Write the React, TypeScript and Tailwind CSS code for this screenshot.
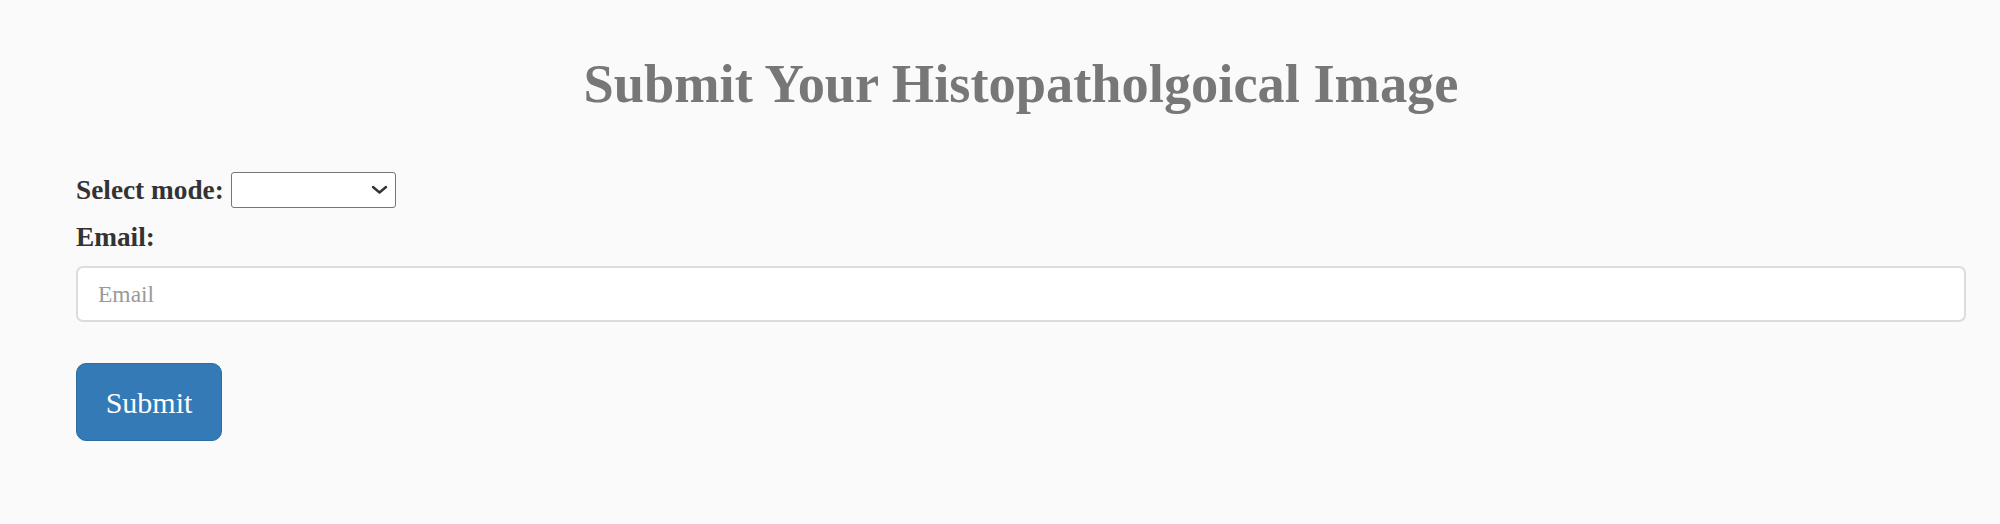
import { FC } from "react";

const Chevron: FC = () => (
  <svg
    width="17"
    height="10"
    viewBox="0 0 17 10"
    fill="none"
    stroke="#333"
    strokeWidth="2.4"
    strokeLinecap="round"
    strokeLinejoin="round"
  >
    <path d="M2 2 L8.5 7.5 L15 2" />
  </svg>
);

const App: FC = () => {
  return (
    <main className="min-h-screen w-full bg-[#fafafa] pl-[76px] pr-[34px] pt-[57px] font-['Liberation_Serif','Times_New_Roman',serif]">
      <h1 className="text-center text-[54.4px] leading-[55px] font-bold text-[#777777]">
        Submit Your Histopatholgoical Image
      </h1>

      <form className="mt-[60px] flex flex-col" onSubmit={(e) => e.preventDefault()}>
        <div className="flex items-center">
          <label className="text-[27.3px] leading-[27px] font-bold text-[#333333]">Select mode:</label>
          <div className="relative ml-[7px] h-[36px] w-[165px]">
            <select className="h-full w-full appearance-none rounded-[3px] border border-[#767676] bg-white" />
            <span className="pointer-events-none absolute right-[8px] top-[13px] flex">
              <Chevron />
            </span>
          </div>
        </div>

        <label className="mt-[16px] text-[27.3px] leading-[27px] font-bold text-[#333333]">Email:</label>
        <input
          type="email"
          placeholder="Email"
          className="mt-[15px] h-[56px] w-full rounded-[7px] border-2 border-[#dcdcdc] bg-white px-[20px] text-[23.5px] text-[#555555] placeholder:text-[#9a9a9a] outline-none"
        />

        <div className="mt-[41px]">
          <button
            type="submit"
            className="h-[78px] w-[146px] rounded-[10px] border border-[#2e6da4] bg-[#337ab7] text-[30px] text-white"
          >
            Submit
          </button>
        </div>
      </form>
    </main>
  );
};

export default App;
